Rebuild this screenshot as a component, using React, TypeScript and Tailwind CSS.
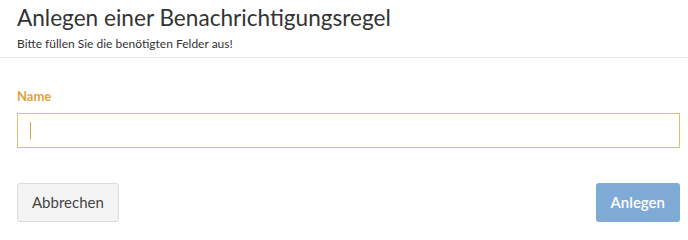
import React from 'react';

const App = () => {
    return (
        <div className="w-[688px] h-[234px] bg-white text-[#333] font-['Lato','Liberation_Sans',sans-serif]">
            <div className="border-b border-[#e8e8e8] pl-[17px] pt-[3px] pb-[5px]">
                <h1 className="text-[22.6px] leading-[29px] font-normal">Anlegen einer Benachrichtigungsregel</h1>
                <p className="text-[12px] leading-[16px] mt-[4px]">Bitte füllen Sie die benötigten Felder aus!</p>
            </div>
            <div className="pl-[17px] pr-[8px] pt-[29px]">
                <label className="block text-[13px] font-bold text-[#e2a23c] leading-[18px]">Name</label>
                <div className="relative mt-[8px]">
                    <input
                        type="text"
                        className="w-full h-[35px] border border-[#d8c173] bg-white outline-none px-3"
                    />
                    {/* caret */}
                    <span className="absolute left-[13px] top-[9px] w-px h-[17px] bg-[#c9a94a]" />
                </div>
                <div className="flex justify-between mt-[35px]">
                    <button className="h-[39px] px-[14px] bg-[#f4f4f4] border border-[#dcdcdc] rounded-[3px] text-[15px] text-[#444]">
                        Abbrechen
                    </button>
                    <button className="h-[39px] px-[15px] bg-[#7faad6] rounded-[3px] text-[15px] font-semibold text-white">
                        Anlegen
                    </button>
                </div>
            </div>
        </div>
    );
};

export default App;
